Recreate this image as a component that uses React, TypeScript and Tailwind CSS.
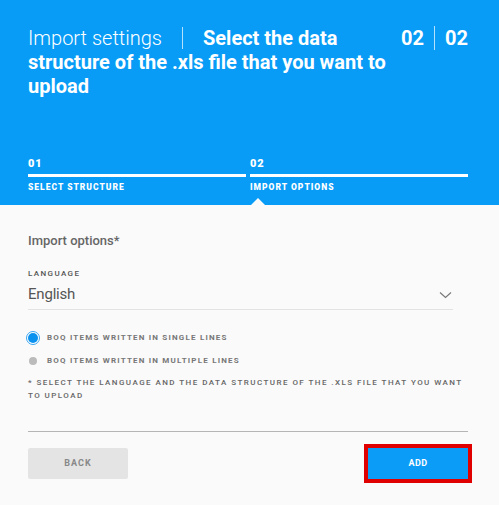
const App = () => {
  return (
    <div className="w-[499px] h-[505px] bg-[#fafafa] font-['Roboto',sans-serif] overflow-hidden">
      {/* Header */}
      <div className="h-[205px] bg-[#089cf6] flex flex-col text-white">
        <div className="flex items-start pl-[28px] pr-[31px] pt-[26px]">
          <h1 className="w-[365px] text-[20px] leading-[24px]">
            <span className="font-light">Import settings</span>
            <span className="inline-block w-px h-[22px] bg-white/70 align-[-4px] mx-[20px]" />
            <span className="font-bold">Select the data structure of the .xls file that you want to upload</span>
          </h1>
          <div className="ml-auto flex items-center text-[20px] leading-[24px] font-bold">
            <span>02</span>
            <span className="w-px h-[24px] bg-white/70 mx-[10px]" />
            <span>02</span>
          </div>
        </div>

        <div className="mt-auto flex gap-[4px] pl-[28px] pr-[31px] pb-[12px]">
          <div className="flex-1">
            <div className="text-[11px] leading-[14px] font-black tracking-[0.8px]">01</div>
            <div className="h-[3px] bg-white mt-[3px]" />
            <div className="text-[8.5px] leading-[12px] font-black tracking-[1px] mt-[4px]">SELECT STRUCTURE</div>
          </div>
          <div className="flex-1 relative">
            <div className="text-[11px] leading-[14px] font-black tracking-[0.8px]">02</div>
            <div className="h-[3px] bg-white mt-[3px]" />
            <div className="text-[8.5px] leading-[12px] font-black tracking-[1px] mt-[4px]">IMPORT OPTIONS</div>
            <div className="absolute left-[1px] -bottom-[12px] w-0 h-0 border-l-[7px] border-r-[7px] border-b-[7px] border-l-transparent border-r-transparent border-b-[#fafafa]" />
          </div>
        </div>
      </div>

      {/* Body */}
      <div className="pl-[28px] pr-[31px] pt-[28px] text-[#666]">
        <div className="text-[13px] leading-[16px] font-medium">Import options*</div>

        <div className="w-[425px] mt-[20px]">
          <div className="text-[8px] leading-[10px] font-medium tracking-[1.4px] text-[#555]">LANGUAGE</div>
          <div className="flex items-center justify-between mt-[5px] pb-[5px] border-b border-[#e3e3e3]">
            <span className="text-[15px] leading-[20px] text-[#555] tracking-[-0.2px]">English</span>
            <svg width="13" height="8" viewBox="0 0 13 8" fill="none" className="mr-[1px] mt-[2px]">
              <path d="M1 1.5L6.5 6.5L12 1.5" stroke="#777" strokeWidth="1.1" />
            </svg>
          </div>
        </div>

        <div className="mt-[21px] flex items-center h-[14px]">
          <span className="ml-[-2px] w-[14px] h-[14px] rounded-full border border-[#3aa5f0] bg-white p-[1px] flex">
            <span className="flex-1 rounded-full bg-[#0b92ef]" />
          </span>
          <span className="ml-[7px] text-[8px] font-bold tracking-[1.2px] text-[#777]">BOQ ITEMS WRITTEN IN SINGLE LINES</span>
        </div>
        <div className="mt-[9px] flex items-center h-[14px]">
          <span className="ml-[1px] w-[8px] h-[8px] rounded-full bg-[#bbb]" />
          <span className="ml-[10px] text-[8px] font-bold tracking-[1.2px] text-[#777]">BOQ ITEMS WRITTEN IN MULTIPLE LINES</span>
        </div>

        <p className="mt-[8px] w-[440px] text-[8px] leading-[13px] font-medium tracking-[1.45px] text-[#666]">
          * SELECT THE LANGUAGE AND THE DATA STRUCTURE OF THE .XLS FILE THAT YOU WANT TO UPLOAD
        </p>

        <div className="mt-[29px] h-px bg-[#b5b5b5]" />

        <div className="mt-[16px] flex justify-between">
          <button type="button" className="w-[100px] h-[31px] rounded-[2px] bg-[#e4e4e4] text-[#888] text-[9px] font-bold tracking-[1px]">
            BACK
          </button>
          <button type="button" className="w-[100px] h-[31px] bg-[#0a9cf7] text-white text-[9px] font-bold tracking-[0.5px] outline-[4px] outline-solid outline-[#e00000]">
            ADD
          </button>
        </div>
      </div>
    </div>
  );
};

export default App;
